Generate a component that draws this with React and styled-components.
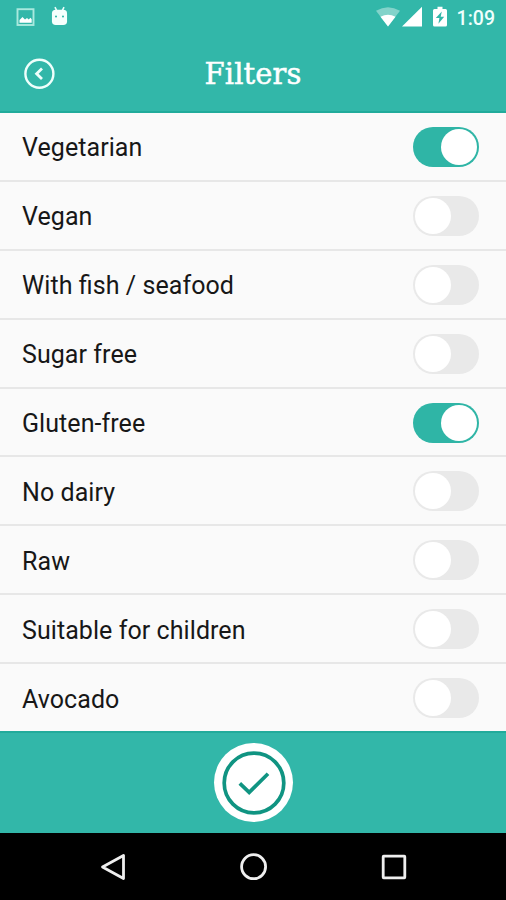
import React, { useState } from 'react';
import styled, { createGlobalStyle } from 'styled-components';

const initialFilters = [
    { label: 'Vegetarian', on: true },
    { label: 'Vegan', on: false },
    { label: 'With fish / seafood', on: false },
    { label: 'Sugar free', on: false },
    { label: 'Gluten-free', on: true },
    { label: 'No dairy', on: false },
    { label: 'Raw', on: false },
    { label: 'Suitable for children', on: false },
    { label: 'Avocado', on: false },
];

function StatusIcons() {
    return (
        <StatusGroup>
            <svg width="19" height="19" viewBox="0 0 19 19" fill="none">
                <rect x="1.5" y="1.2" width="16" height="15.8" stroke="#a9e9de" strokeWidth="1.9" />
                <path d="M3.5 14.7V12l3-3 2.5 2.5 2-1.5 1.7 1.5 1.8-1.7 1.2 1.5v3.4z" fill="#fff" />
            </svg>
            <svg width="17" height="20" viewBox="0 0 18 21">
                <path d="M4.2 1l2 4M13.8 1l-2 4" stroke="#eafffb" strokeWidth="1.7" />
                <path d="M1 8Q1 4 5 4h8q4 0 4 4v8q0 4-4 4H5q-4 0-4-4z" fill="#f6fffd" />
                <circle cx="5.3" cy="11" r="1.1" fill="#32b7a9" />
                <circle cx="12.7" cy="11" r="1.1" fill="#32b7a9" />
            </svg>
        </StatusGroup>
    );
}

function SignalIcons() {
    return (
        <SignalGroup>
            <svg width="70" height="22" viewBox="0 0 70 22">
                <path d="M0 4.8Q12-2.5 24 4.8L12 20.5z" fill="#83d3ca" />
                <path d="M4.5 10.7Q12 7 19.5 10.7L12 20.5z" fill="#fff" />
                <path d="M26 20.5h20V.8z" fill="#fff" />
                <path
                    d="M58.5 3H61.5V.8h5V3h3q1.500 0 1.500 1.500V19q0 1.500-1.500 1.500h-11Q57 20.500 57 19V4.500Q57 3 58.500 3z"
                    fill="#fff"
                />
                <path d="M65.8 5.500l-6 6.500h3.600l-1 5.800 5.800-7h-3.500z" fill="#32b7a9" />
            </svg>
            <Clock>1:09</Clock>
        </SignalGroup>
    );
}

function App() {
    const [filters, setFilters] = useState(initialFilters);

    const toggle = (index) =>
        setFilters(filters.map((f, i) => (i === index ? { ...f, on: !f.on } : f)));

    return (
        <Screen>
            <GlobalStyle />
            <StatusBar>
                <StatusIcons />
                <SignalIcons />
            </StatusBar>
            <Header>
                <BackButton aria-label="Back">
                    <svg width="32" height="32" viewBox="0 0 32 32" fill="none" stroke="#effffc">
                        <circle cx="16.4" cy="15.8" r="14" strokeWidth="2.4" />
                        <path d="M19 10.6L13.6 15.8l5.4 5.2" strokeWidth="2.8" />
                    </svg>
                </BackButton>
                <Title>Filters</Title>
            </Header>

            <FilterList>
                {filters.map(({ label, on }, index) => (
                    <FilterRow key={label}>
                        <Label>{label}</Label>
                        <Switch role="switch" aria-checked={on} $on={on} onClick={() => toggle(index)}>
                            <Knob />
                        </Switch>
                    </FilterRow>
                ))}
            </FilterList>

            <Footer>
                <ApplyButton aria-label="Apply">
                    <svg width="64" height="64" viewBox="0 0 64 64" fill="none" stroke="#109482">
                        <circle cx="32" cy="32" r="29.8" strokeWidth="3.7" />
                        <path d="M17.8 32.3l9.4 9L46 22.8" strokeWidth="3.7" />
                    </svg>
                </ApplyButton>
            </Footer>

            <NavBar>
                <svg width="26" height="28" viewBox="0 0 26 28">
                    <path d="M2.5 14L23.5 2.5v23z" />
                </svg>
                <svg width="28" height="28" viewBox="0 0 28 28">
                    <circle cx="13.6" cy="13.7" r="12" />
                </svg>
                <svg width="26" height="26" viewBox="0 0 26 26">
                    <rect x="2.2" y="2.2" width="21.6" height="21.6" rx="0.5" />
                </svg>
            </NavBar>
        </Screen>
    );
}

const GlobalStyle = createGlobalStyle`
    body {
        margin: 0;
    }

    * {
        box-sizing: border-box;
    }

    button {
        border: 0;
        padding: 0;
        background: none;
    }

    svg {
        display: block;
    }
`;

const Screen = styled.div`
    display: flex;
    flex-direction: column;
    width: 506px;
    height: 900px;
    overflow: hidden;
    background: #fafafa;
    font-family: Roboto, sans-serif;
`;

const StatusBar = styled.div`
    display: flex;
    justify-content: space-between;
    align-items: flex-start;
    height: 36px;
    flex: none;
    padding: 6px 11px 0 16px;
    background: #32b7a9;
`;

const StatusGroup = styled.div`
    display: flex;
    gap: 16px;

    svg:first-child {
        margin-top: 2px;
    }
`;

const SignalGroup = styled.div`
    display: flex;
    align-items: flex-start;

    svg {
        overflow: visible;
    }
`;

const Clock = styled.span`
    margin-left: 11px;
    font-size: 19.5px;
    font-weight: 500;
    line-height: 25px;
    color: #effffc;
`;

const Header = styled.header`
    display: grid;
    grid-template-columns: 55px 1fr 55px;
    align-items: center;
    flex: none;
    height: 77px;
    background: #32b7a9;
    border-bottom: 2px solid #21ab9b;
`;

const BackButton = styled.button`
    justify-self: end;
    width: 32px;
    height: 32px;
`;

const Title = styled.h1`
    margin: 0;
    font-family: 'DejaVu Serif', serif;
    font-size: 29px;
    font-weight: 400;
    line-height: 36px;
    letter-spacing: 0.1px;
    text-align: center;
    color: #fff;
    -webkit-text-stroke: 0.5px #fff;
`;

const FilterList = styled.div`
    flex: none;
    height: 618px;
    overflow: hidden;
`;

const FilterRow = styled.div`
    display: flex;
    align-items: center;
    justify-content: space-between;
    height: 68.9px;
    padding: 1px 27px 0 22px;
    border-bottom: 2px solid #e7e7e7;
`;

const Label = styled.span`
    font-size: 25px;
    line-height: 32px;
    padding-top: 3px;
    letter-spacing: 0.07px;
    font-feature-settings: 'liga' 1;
    color: #171717;
`;

const Switch = styled.button`
    display: flex;
    justify-content: ${({ $on }) => ($on ? 'flex-end' : 'flex-start')};
    align-items: center;
    width: 66px;
    height: 40px;
    padding: 0 2px;
    border-radius: 20px;
    background: ${({ $on }) => ($on ? '#2fb5a6' : '#e9e9e9')};
`;

const Knob = styled.span`
    width: 36px;
    height: 36px;
    border-radius: 50%;
    background: #fff;
`;

const Footer = styled.footer`
    display: flex;
    align-items: center;
    justify-content: center;
    flex: none;
    height: 102px;
    padding: 0 0 1px 1px;
    border-top: 2px solid #21ab9b;
    background: #32b7a9;
`;

const ApplyButton = styled.button`
    display: flex;
    align-items: center;
    justify-content: center;
    width: 79px;
    height: 79px;
    border-radius: 50%;
    background: #fff;
`;

const NavBar = styled.nav`
    display: flex;
    align-items: center;
    justify-content: space-between;
    flex: 1;
    padding: 1px 99px 0 100px;
    background: #000;

    svg {
        fill: none;
        stroke: #efefef;
        stroke-width: 2.8;
        stroke-linejoin: round;
    }
`;

export default App;
